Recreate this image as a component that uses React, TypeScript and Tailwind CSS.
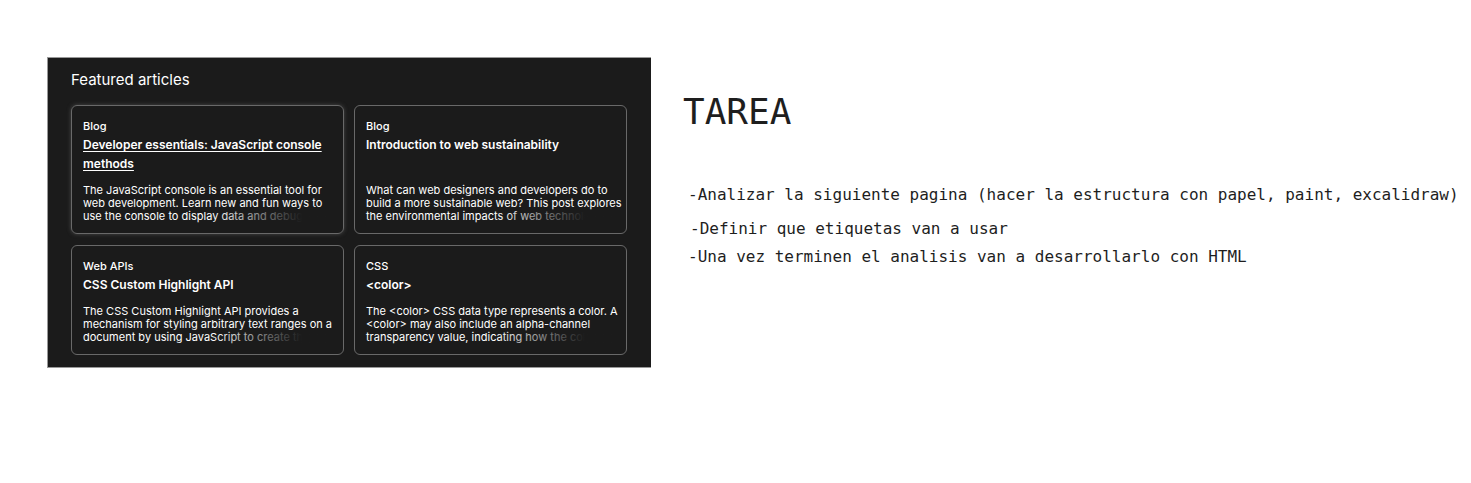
type Article = {
  tag: string;
  title: string;
  lines: string[];
  active?: boolean;
};

const articles: Article[] = [
  {
    tag: "Blog",
    title: "Developer essentials: JavaScript console methods",
    lines: [
      "The JavaScript console is an essential tool for",
      "web development. Learn new and fun ways to",
      "use the console to display data and debug",
    ],
    active: true,
  },
  {
    tag: "Blog",
    title: "Introduction to web sustainability",
    lines: [
      "What can web designers and developers do to",
      "build a more sustainable web? This post explores",
      "the environmental impacts of web technolo",
    ],
  },
  {
    tag: "Web APIs",
    title: "CSS Custom Highlight API",
    lines: [
      "The CSS Custom Highlight API provides a",
      "mechanism for styling arbitrary text ranges on a",
      "document by using JavaScript to create the",
    ],
  },
  {
    tag: "CSS",
    title: "<color>",
    lines: [
      "The <color> CSS data type represents a color. A",
      "<color> may also include an alpha-channel",
      "transparency value, indicating how the col",
    ],
  },
];

function ArticleCard({ article }: { article: Article }) {
  return (
    <article
      className={`flex flex-col rounded-md border border-[#696969] px-[11px] pt-[11px] pb-[10px] ${
        article.active ? "shadow-[0_0_4px_0_#4a4a4a]" : ""
      }`}
    >
      <p className="text-[11px] leading-[18px] font-medium">{article.tag}</p>
      <h3 className="mb-[11px] grow text-xs leading-[19px] font-semibold">
        <a
          href="#"
          className={article.active ? "underline underline-offset-2" : "no-underline"}
        >
          {article.title}
        </a>
      </h3>
      <p className="relative text-[11px] leading-[13px] whitespace-nowrap">
        {article.lines.map((line) => (
          <span key={line} className="block">
            {line}
          </span>
        ))}
        <span className="absolute right-0 bottom-0 h-[13px] w-[120px] bg-linear-to-r from-[#1b1b1b]/0 to-[#1b1b1b] to-75%" />
      </p>
    </article>
  );
}

export default function App() {
  return (
    <main className="flex min-h-screen items-start gap-8 bg-white pt-[57px] pl-[47px] text-[#1e1e1e]">
      <section className="w-[604px] shrink-0 border-t border-b border-l border-[#999999] bg-[#1b1b1b] pt-3 pr-6 pb-3 pl-[23px] font-['Inter',sans-serif] text-white">
        <h2 className="mb-[15px] text-[15px] leading-5">Featured articles</h2>
        <div className="grid grid-cols-2 gap-x-[10px] gap-y-[11px]">
          {articles.map((article) => (
            <ArticleCard key={article.title} article={article} />
          ))}
        </div>
      </section>
      <section className="pt-[33px] font-['DejaVu_Sans_Mono',monospace]">
        <h1 className="text-4xl leading-[44px]">TAREA</h1>
        <ul className="pt-[51px] pl-[5px] text-base leading-5 whitespace-nowrap">
          <li className="mb-[14px]">
            -Analizar la siguiente pagina (hacer la estructura con papel, paint, excalidraw)
          </li>
          <li className="mb-2 pl-[2px]">-Definir que etiquetas van a usar</li>
          <li>-Una vez terminen el analisis van a desarrollarlo con HTML</li>
        </ul>
      </section>
    </main>
  );
}
